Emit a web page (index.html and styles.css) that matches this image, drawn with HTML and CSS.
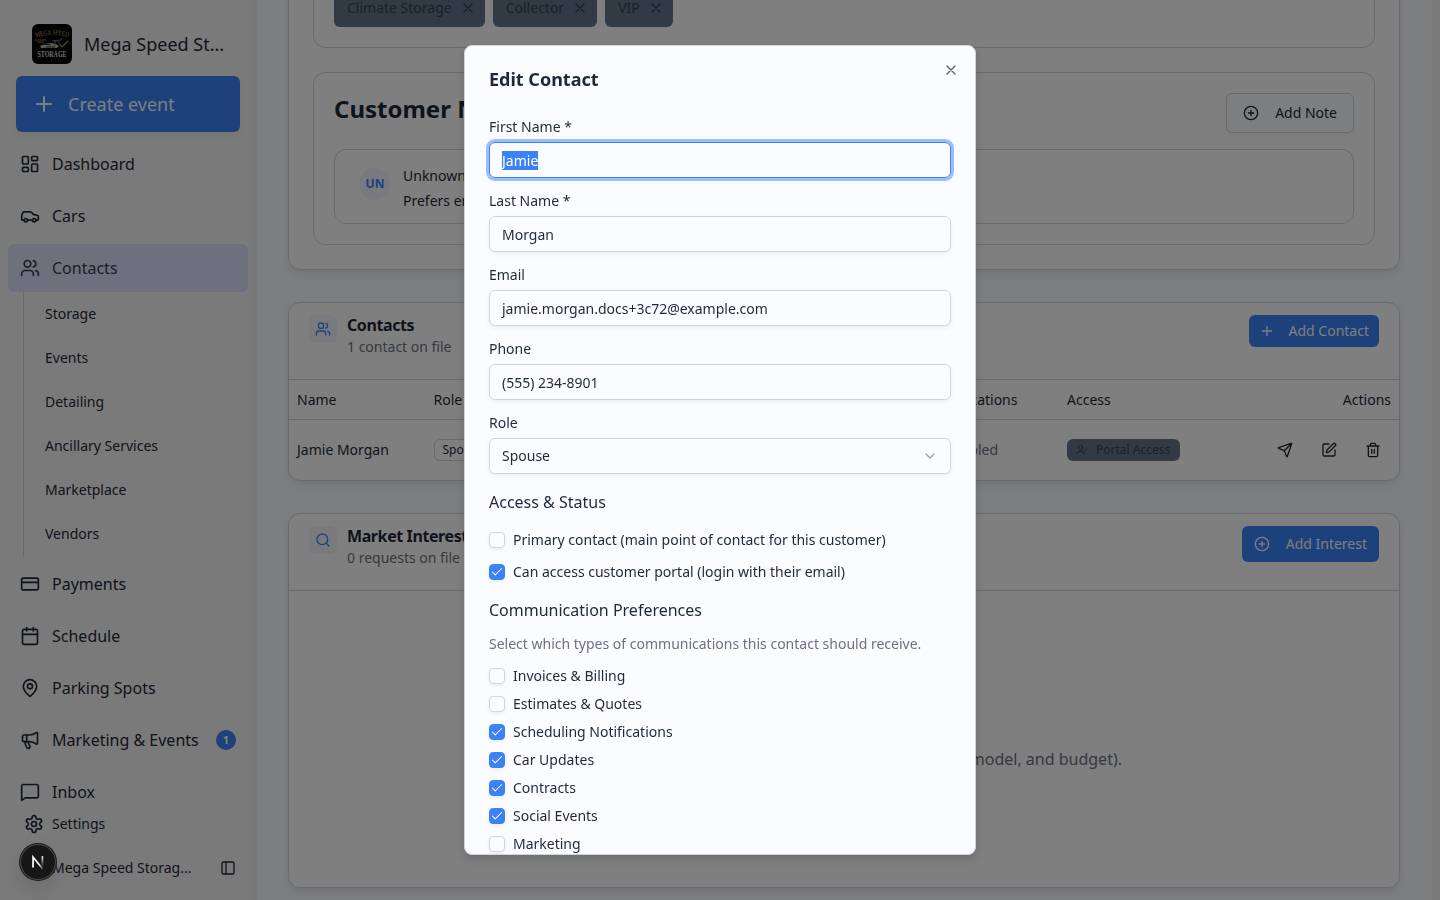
FILE: index.html
```html
<!DOCTYPE html>
<html lang="en">
<head>
    <meta charset="UTF-8">
    <meta name="viewport" content="width=device-width, initial-scale=1.0">
    <title>Mega Speed Storage</title>
    <link rel="stylesheet" href="styles.css">
</head>
<body>
    <svg class="sprite">
        <symbol id="plus" viewBox="0 0 24 24"><path d="M5 12h14M12 5v14"/></symbol>
        <symbol id="circle-plus" viewBox="0 0 24 24"><circle cx="12" cy="12" r="10"/><path d="M8 12h8M12 8v8"/></symbol>
        <symbol id="x" viewBox="0 0 24 24"><path d="M18 6 6 18M6 6l12 12"/></symbol>
        <symbol id="dashboard" viewBox="0 0 24 24"><rect x="3" y="3" width="7" height="9" rx="1"/><rect x="14" y="3" width="7" height="5" rx="1"/><rect x="14" y="12" width="7" height="9" rx="1"/><rect x="3" y="16" width="7" height="5" rx="1"/></symbol>
        <symbol id="car" viewBox="0 0 24 24"><path d="M19 17h2c.6 0 1-.4 1-1v-3c0-.9-.7-1.700-1.500-1.900C18.700 10.600 16 10 16 10s-1.300-1.400-2.200-2.300c-.5-.4-1.100-.7-1.800-.7H5c-.6 0-1.100.4-1.400.9l-1.400 2.900A3.700 3.700 0 0 0 2 12v4c0 .6.4 1 1 1h2"/><circle cx="7" cy="17" r="2"/><path d="M9 17h6"/><circle cx="17" cy="17" r="2"/></symbol>
        <symbol id="users" viewBox="0 0 24 24"><path d="M16 21v-2a4 4 0 0 0-4-4H6a4 4 0 0 0-4 4v2"/><circle cx="9" cy="7" r="4"/><path d="M22 21v-2a4 4 0 0 0-3-3.870M16 3.130a4 4 0 0 1 0 7.750"/></symbol>
        <symbol id="card" viewBox="0 0 24 24"><rect x="2" y="5" width="20" height="14" rx="2"/><path d="M2 10h20"/></symbol>
        <symbol id="calendar" viewBox="0 0 24 24"><path d="M8 2v4M16 2v4"/><rect x="3" y="4" width="18" height="18" rx="2"/><path d="M3 10h18"/></symbol>
        <symbol id="pin" viewBox="0 0 24 24"><path d="M20 10c0 4.993-5.539 10.193-7.399 11.799a1 1 0 0 1-1.202 0C9.539 20.193 4 14.993 4 10a8 8 0 0 1 16 0"/><circle cx="12" cy="10" r="3"/></symbol>
        <symbol id="megaphone" viewBox="0 0 24 24"><path d="M11 6a13 13 0 0 0 8.400-2.800A1 1 0 0 1 21 4v12a1 1 0 0 1-1.600.8A13 13 0 0 0 11 14H5a2 2 0 0 1-2-2V8a2 2 0 0 1 2-2z"/><path d="M6 14a12 12 0 0 0 2.400 7.200 2 2 0 0 0 3.200-2.400A8 8 0 0 1 10 14M8 6v8"/></symbol>
        <symbol id="message" viewBox="0 0 24 24"><path d="M22 17a2 2 0 0 1-2 2H6.500L2 22V5a2 2 0 0 1 2-2h16a2 2 0 0 1 2 2z"/></symbol>
        <symbol id="settings" viewBox="0 0 24 24"><path d="M12.220 2h-.44a2 2 0 0 0-2 2v.18a2 2 0 0 1-1 1.730l-.43.25a2 2 0 0 1-2 0l-.15-.08a2 2 0 0 0-2.730.73l-.22.38a2 2 0 0 0 .73 2.730l.15.1a2 2 0 0 1 1 1.720v.51a2 2 0 0 1-1 1.740l-.15.09a2 2 0 0 0-.73 2.730l.22.38a2 2 0 0 0 2.730.73l.15-.08a2 2 0 0 1 2 0l.43.25a2 2 0 0 1 1 1.730V20a2 2 0 0 0 2 2h.44a2 2 0 0 0 2-2v-.18a2 2 0 0 1 1-1.730l.43-.25a2 2 0 0 1 2 0l.15.08a2 2 0 0 0 2.730-.73l.22-.39a2 2 0 0 0-.73-2.730l-.15-.08a2 2 0 0 1-1-1.740v-.5a2 2 0 0 1 1-1.740l.15-.09a2 2 0 0 0 .73-2.730l-.22-.38a2 2 0 0 0-2.730-.73l-.15.08a2 2 0 0 1-2 0l-.43-.25a2 2 0 0 1-1-1.730V4a2 2 0 0 0-2-2z"/><circle cx="12" cy="12" r="3"/></symbol>
        <symbol id="panel" viewBox="0 0 24 24"><rect x="3" y="3" width="18" height="18" rx="2"/><path d="M9 3v18"/></symbol>
        <symbol id="search" viewBox="0 0 24 24"><circle cx="11" cy="11" r="8"/><path d="m21 21-4.300-4.300"/></symbol>
        <symbol id="user-check" viewBox="0 0 24 24"><path d="m16 11 2 2 4-4M16 21v-2a4 4 0 0 0-4-4H6a4 4 0 0 0-4 4v2"/><circle cx="9" cy="7" r="4"/></symbol>
        <symbol id="send" viewBox="0 0 24 24"><path d="M14.536 21.686a.5.5 0 0 0 .937-.024l6.500-19a.496.496 0 0 0-.635-.635l-19 6.500a.5.5 0 0 0-.024.937l7.930 3.180a2 2 0 0 1 1.112 1.110zM21.854 2.147l-10.940 10.939"/></symbol>
        <symbol id="edit" viewBox="0 0 24 24"><path d="M12 3H5a2 2 0 0 0-2 2v14a2 2 0 0 0 2 2h14a2 2 0 0 0 2-2v-7"/><path d="M18.375 2.625a1 1 0 0 1 3 3l-9.013 9.014a2 2 0 0 1-.853.505l-2.873.84a.5.5 0 0 1-.62-.62l.84-2.873a2 2 0 0 1 .506-.852z"/></symbol>
        <symbol id="trash" viewBox="0 0 24 24"><path d="M3 6h18M19 6v14c0 1-1 2-2 2H7c-1 0-2-1-2-2V6M8 6V4c0-1 1-2 2-2h4c1 0 2 1 2 2v2M10 11v6M14 11v6"/></symbol>
        <symbol id="chevron" viewBox="0 0 24 24"><path d="m6 9 6 6 6-6"/></symbol>
        <symbol id="check" viewBox="0 0 24 24"><path d="M20 6 9 17l-5-5"/></symbol>
    </svg>

    <div class="app">
        <aside class="sidebar">
            <div class="brand">
                <svg class="brand-logo" viewBox="0 0 40 40">
                    <rect width="40" height="40" rx="6" fill="#050707"/>
                    <path id="arc" d="M4 13.500Q20 8 38 13.500" fill="none"/>
                    <text class="logo-arc" textLength="33" lengthAdjust="spacingAndGlyphs"><textPath href="#arc">MEGA SPEED</textPath></text>
                    <path d="M3 16h11M5 18h7" stroke="#86683e" stroke-width="1.200"/>
                    <path d="M8 22l5-2 6-1 5 1 3 2-2 2H9z" fill="#b8b9a8"/>
                    <path d="M11 20l8 1M14 23h9" stroke="#30332c" stroke-width="1"/>
                    <path d="M23 16v6M26 17l2 4M20 17l9-1M29 14l1 2" stroke="#76775f" stroke-width="1"/>
                    <path d="M28 21l2 2 6-6" stroke="#9d955f" stroke-width="1.200" fill="none"/>
                    <text class="logo-name" x="5.500" y="33" textLength="29" lengthAdjust="spacingAndGlyphs">STORAGE</text>
                </svg>
                <span>Mega Speed St...</span>
            </div>
            <button class="create"><svg class="icon"><use href="#plus"/></svg>Create event</button>
            <nav class="nav">
                <a class="nav-item"><svg class="icon"><use href="#dashboard"/></svg>Dashboard</a>
                <a class="nav-item"><svg class="icon"><use href="#car"/></svg>Cars</a>
                <a class="nav-item active"><svg class="icon"><use href="#users"/></svg>Contacts</a>
                <div class="subnav">
                    <a>Storage</a>
                    <a>Events</a>
                    <a>Detailing</a>
                    <a>Ancillary Services</a>
                    <a>Marketplace</a>
                    <a>Vendors</a>
                </div>
                <a class="nav-item"><svg class="icon"><use href="#card"/></svg>Payments</a>
                <a class="nav-item"><svg class="icon"><use href="#calendar"/></svg>Schedule</a>
                <a class="nav-item"><svg class="icon"><use href="#pin"/></svg>Parking Spots</a>
                <a class="nav-item"><svg class="icon"><use href="#megaphone"/></svg>Marketing &amp; Events<span class="count">1</span></a>
                <a class="nav-item"><svg class="icon"><use href="#message"/></svg>Inbox</a>
            </nav>
            <div class="sidebar-footer">
                <a class="settings"><svg class="icon"><use href="#settings"/></svg>Settings</a>
                <div class="team"><span>Mega Speed Storag...</span><svg class="icon"><use href="#panel"/></svg></div>
            </div>
        </aside>

        <main class="main">
            <section class="card profile">
                <div class="panel tags">
                    <span class="tag">Climate Storage<svg class="icon"><use href="#x"/></svg></span>
                    <span class="tag">Collector<svg class="icon"><use href="#x"/></svg></span>
                    <span class="tag">VIP<svg class="icon"><use href="#x"/></svg></span>
                </div>
                <div class="panel">
                    <div class="panel-head">
                        <h2>Customer Notes</h2>
                        <button class="btn outline"><svg class="icon"><use href="#circle-plus"/></svg>Add Note</button>
                    </div>
                    <div class="note">
                        <span class="avatar">UN</span>
                        <div>
                            <p>Unknown</p>
                            <p>Prefers email</p>
                        </div>
                    </div>
                </div>
            </section>

            <section class="card">
                <header class="card-head">
                    <span class="tile"><svg class="icon"><use href="#users"/></svg></span>
                    <div class="card-title">
                        <h3>Contacts</h3>
                        <p>1 contact on file</p>
                    </div>
                    <button class="btn primary small"><svg class="icon"><use href="#plus"/></svg>Add Contact</button>
                </header>
                <table class="contacts">
                    <thead>
                        <tr>
                            <th class="col-name">Name</th>
                            <th class="col-role">Role</th>
                            <th class="col-email">Email</th>
                            <th class="col-comm">Communications</th>
                            <th class="col-access">Access</th>
                            <th class="col-actions">Actions</th>
                        </tr>
                    </thead>
                    <tbody>
                        <tr>
                            <td>Jamie Morgan</td>
                            <td><span class="role">Spouse</span></td>
                            <td>jamie.morgan</td>
                            <td><span class="enabled">4 enabled</span></td>
                            <td><span class="access"><svg class="icon"><use href="#user-check"/></svg>Portal Access</span></td>
                            <td>
                                <div class="actions">
                                    <svg class="icon"><use href="#send"/></svg>
                                    <svg class="icon"><use href="#edit"/></svg>
                                    <svg class="icon"><use href="#trash"/></svg>
                                </div>
                            </td>
                        </tr>
                    </tbody>
                </table>
            </section>

            <section class="card market">
                <header class="card-head">
                    <span class="tile"><svg class="icon"><use href="#search"/></svg></span>
                    <div class="card-title">
                        <h3>Market Interests</h3>
                        <p>0 requests on file</p>
                    </div>
                    <button class="btn primary"><svg class="icon"><use href="#circle-plus"/></svg>Add Interest</button>
                </header>
                <div class="empty"><p>Add a request for this customer (make, model, and budget).</p></div>
            </section>
        </main>
    </div>

    <div class="overlay">
        <div class="modal">
            <svg class="icon close"><use href="#x"/></svg>
            <h2>Edit Contact</h2>
            <div class="field">
                <label>First Name *</label>
                <div class="input focused"><span class="selected">Jamie</span></div>
            </div>
            <div class="field">
                <label>Last Name *</label>
                <div class="input">Morgan</div>
            </div>
            <div class="field">
                <label>Email</label>
                <div class="input">jamie.morgan.docs+3c72@example.com</div>
            </div>
            <div class="field">
                <label>Phone</label>
                <div class="input">(555) 234-8901</div>
            </div>
            <div class="field">
                <label>Role</label>
                <div class="input select">Spouse<svg class="icon"><use href="#chevron"/></svg></div>
            </div>

            <h3>Access &amp; Status</h3>
            <div class="checks wide">
                <label class="check"><span class="box"></span>Primary contact (main point of contact for this customer)</label>
                <label class="check"><span class="box on"><svg class="icon"><use href="#check"/></svg></span>Can access customer portal (login with their email)</label>
            </div>

            <h3>Communication Preferences</h3>
            <p class="hint">Select which types of communications this contact should receive.</p>
            <div class="checks">
                <label class="check"><span class="box"></span>Invoices &amp; Billing</label>
                <label class="check"><span class="box"></span>Estimates &amp; Quotes</label>
                <label class="check"><span class="box on"><svg class="icon"><use href="#check"/></svg></span>Scheduling Notifications</label>
                <label class="check"><span class="box on"><svg class="icon"><use href="#check"/></svg></span>Car Updates</label>
                <label class="check"><span class="box on"><svg class="icon"><use href="#check"/></svg></span>Contracts</label>
                <label class="check"><span class="box on"><svg class="icon"><use href="#check"/></svg></span>Social Events</label>
                <label class="check"><span class="box"></span>Marketing</label>
            </div>
        </div>
    </div>

    <div class="dev-badge">
        <svg viewBox="0 0 40 40">
            <defs>
                <linearGradient id="fade" x1="0" y1="0" x2="0" y2="1"><stop offset="0" stop-color="#fff"/><stop offset="1" stop-color="#fff" stop-opacity="0"/></linearGradient>
                <linearGradient id="diag" x1="0" y1="0" x2="1" y2="1"><stop offset=".6" stop-color="#fff"/><stop offset="1" stop-color="#fff" stop-opacity=".1"/></linearGradient>
            </defs>
            <path d="M14.500 26V14.500L25.500 28" fill="none" stroke="url(#diag)" stroke-width="1.900"/>
            <rect x="24" y="13.500" width="1.800" height="12" fill="url(#fade)"/>
        </svg>
    </div>
</body>
</html>
```

FILE: styles.css
```css
* {
    box-sizing: border-box;
}
body {
    margin: 0;
    height: 100vh;
    overflow: hidden;
    font-family: "Noto Sans", sans-serif;
    font-size: 14px;
    line-height: 20px;
    color: #1f2937;
    background-color: #fafcff;
}
h2, h3, p {
    margin: 0;
}
button {
    font-family: inherit;
    color: inherit;
    border: none;
}
.sprite {
    display: none;
}
.icon {
    width: 16px;
    height: 16px;
    flex-shrink: 0;
    fill: none;
    stroke: currentColor;
    stroke-width: 2;
    stroke-linecap: round;
    stroke-linejoin: round;
}
.app {
    display: flex;
    height: 100vh;
}

/* Sidebar */
.sidebar {
    width: 257px;
    height: 100vh;
    flex-shrink: 0;
    display: flex;
    flex-direction: column;
    background-color: #f5f5f5;
    border-right: 5px solid #f1f1f1;
}
.brand {
    display: flex;
    align-items: center;
    gap: 12px;
    padding: 24px 0 12px 32px;
    font-size: 18px;
    line-height: 28px;
    white-space: nowrap;
}
.brand-logo {
    width: 40px;
    height: 40px;
}
.logo-arc {
    font-family: "Liberation Serif", serif;
    font-size: 7px;
    fill: #b8945c;
}
.logo-name {
    font-family: "Liberation Serif", serif;
    font-size: 7.5px;
    font-weight: bold;
    fill: #d8d8d0;
}
.create {
    display: flex;
    align-items: center;
    gap: 12px;
    width: 224px;
    height: 56px;
    margin: 0 0 8px 16px;
    padding: 0 16px;
    flex-shrink: 0;
    border-radius: 6px;
    background-color: #3b82f6;
    color: #fafcff;
    font-size: 18px;
    box-shadow: 0 4px 8px rgba(0, 0, 0, 0.05);
}
.create .icon {
    width: 24px;
    height: 24px;
}
.nav {
    flex: 1;
    min-height: 0;
    overflow: hidden;
    padding-left: 8px;
}
.nav-item {
    display: flex;
    align-items: center;
    gap: 12px;
    width: 240px;
    height: 48px;
    margin-bottom: 4px;
    padding: 0 12px;
    border-radius: 6px;
    font-size: 16px;
    white-space: nowrap;
}
.nav-item .icon {
    width: 20px;
    height: 20px;
}
.nav-item.active {
    margin-bottom: 0;
    background-color: #dfe1fb;
    color: #374151;
}
.count {
    width: 20px;
    height: 20px;
    margin-left: auto;
    border-radius: 50%;
    background-color: #3b82f6;
    color: #fff;
    font-size: 11px;
    font-weight: 700;
    text-align: center;
}
.subnav {
    margin: 0 0 4px 15px;
    border-left: 1px solid #d1d5db;
}
.subnav a {
    display: block;
    padding-left: 21px;
    line-height: 44px;
}
.sidebar-footer {
    height: 96px;
}
.settings {
    display: flex;
    align-items: center;
    gap: 8px;
    height: 40px;
    padding-left: 24px;
}
.settings .icon {
    width: 20px;
    height: 20px;
}
.team {
    display: flex;
    align-items: center;
    justify-content: space-between;
    height: 48px;
    padding: 0 16px 0 52px;
}

/* Main column */
.main {
    flex: 1;
    height: 100vh;
    padding: 0 32px 0 31px;
    overflow: hidden;
    border-right: 8px solid #f1f1f1;
}
.card {
    margin-bottom: 32px;
    border: 1px solid #d1d5db;
    border-radius: 12px;
    background-color: #fff;
    box-shadow: 0 4px 8px -1px rgba(0, 0, 0, 0.1);
}
.profile {
    margin-top: -57px;
    padding: 24px;
}
.panel {
    padding: 20px;
    border: 1px solid #d1d5db;
    border-radius: 12px;
}
.tags {
    display: flex;
    gap: 8px;
    margin-bottom: 24px;
}
.tag {
    display: flex;
    align-items: center;
    gap: 8px;
    height: 38px;
    padding: 0 9px 0 13px;
    border-radius: 6px;
    background-color: #64748b;
    color: #374151;
}
.panel-head {
    display: flex;
    justify-content: space-between;
    margin-bottom: 16px;
}
.panel-head h2 {
    font-size: 24px;
    line-height: 32px;
    font-weight: 700;
}
.btn {
    display: flex;
    align-items: center;
    gap: 16px;
    height: 36px;
    padding: 0 12px;
    border-radius: 6px;
    font-size: 14px;
    line-height: 20px;
    white-space: nowrap;
}
.btn.outline {
    height: 40px;
    padding: 0 16px;
    border: 1px solid #d1d5db;
    background-color: #fafcff;
    box-shadow: 0 2px 4px rgba(0, 0, 0, 0.05);
}
.btn.primary {
    background-color: #3b82f6;
    color: #fafcff;
}
.btn.small {
    height: 32px;
    padding: 0 10px;
    gap: 14px;
}
.note {
    display: flex;
    gap: 12px;
    height: 75px;
    padding: 16px 24px;
    border: 1px solid #d1d5db;
    border-radius: 12px;
}
.note p {
    margin-bottom: 5px;
}
.avatar {
    width: 32px;
    height: 32px;
    margin-top: 2px;
    border-radius: 50%;
    background-color: #f1f5fd;
    color: #3b82f6;
    font-size: 12px;
    line-height: 32px;
    font-weight: 700;
    text-align: center;
}
.card-head {
    display: flex;
    align-items: flex-start;
    height: 77px;
    padding: 12px 20px;
    border-bottom: 1px solid #d1d5db;
}
.tile {
    display: flex;
    align-items: center;
    justify-content: center;
    width: 28px;
    height: 28px;
    border-radius: 6px;
    background-color: #f1f5fd;
    color: #3b82f6;
}
.card-title {
    margin: 0 auto 0 10px;
}
.card-title h3 {
    margin-bottom: 2px;
    font-size: 16px;
    line-height: 20px;
    font-weight: 700;
    letter-spacing: -0.4px;
}
.card-title p {
    color: #6b7280;
}
.contacts {
    width: 100%;
    table-layout: fixed;
    border-collapse: separate;
    border-spacing: 0;
    text-align: left;
}
.contacts th {
    height: 40px;
    padding: 0 8px;
    font-weight: 400;
    border-bottom: 1px solid #d1d5db;
}
.contacts td {
    height: 60px;
    padding: 0 8px;
}
.contacts .col-name {
    width: 136.5px;
}
.contacts .col-role {
    width: 160px;
}
.contacts .col-comm {
    width: 161px;
}
.contacts .col-access {
    width: 160px;
}
.contacts .col-actions {
    width: 180px;
    text-align: right;
}
.role, .access {
    display: inline-flex;
    align-items: center;
    height: 22px;
    padding: 0 8px;
    border: 1px solid #d1d5db;
    border-radius: 6px;
    font-size: 12px;
    line-height: 16px;
    vertical-align: middle;
}
.access {
    gap: 8px;
    padding: 0 10px 0 9px;
    border: none;
    background-color: #64748b;
    color: #374151;
}
.access .icon {
    width: 12px;
    height: 12px;
}
.enabled {
    display: inline-block;
    width: 92px;
    color: #6b7280;
    text-align: right;
}
.actions {
    display: flex;
    justify-content: flex-end;
    gap: 28px;
    padding-right: 10px;
}
.market {
    height: 375px;
}
.empty {
    width: 556px;
    margin: 156px auto 0;
    font-size: 16px;
    line-height: 24px;
    color: #6b7280;
    text-align: right;
}

/* Edit contact dialog */
.overlay {
    position: fixed;
    inset: 0;
    display: flex;
    align-items: center;
    justify-content: center;
    background-color: rgba(0, 0, 0, 0.5);
}
.modal {
    position: relative;
    width: 512px;
    height: 810px;
    padding: 24px;
    overflow: hidden;
    border: 1px solid #d1d5db;
    border-radius: 8px;
    background-color: #fafcff;
    box-shadow: 0 4px 10px rgba(0, 0, 0, 0.15);
}
.close {
    position: absolute;
    top: 16px;
    right: 16px;
    color: #5b6270;
}
.modal h2 {
    margin-bottom: 24px;
    font-size: 18px;
    line-height: 18px;
    font-weight: 700;
}
.field {
    margin-bottom: 8px;
}
.field label {
    display: block;
    height: 30px;
    line-height: 30px;
}
.input {
    display: flex;
    align-items: center;
    height: 36px;
    padding: 2px 12px 0;
    border: 1px solid #d1d5db;
    border-radius: 6px;
    box-shadow: 0 2px 5px rgba(0, 0, 0, 0.06);
}
.input.focused {
    padding-top: 0;
    border-color: #3b82f6;
    box-shadow: 0 0 0 3px rgba(59, 130, 246, 0.5);
}
.selected {
    line-height: 19px;
    background-color: #3b82f6;
    color: #fff;
}
.input.select {
    justify-content: space-between;
    padding-top: 0;
}
.select .icon {
    color: #a0a5ad;
}
.modal h3 {
    margin: 16px 0;
    font-size: 16px;
    line-height: 24px;
    font-weight: 400;
}
.modal .hint {
    margin: -4px 0 12px;
    color: #6b7280;
}
.checks {
    display: flex;
    flex-direction: column;
    gap: 8px;
}
.checks.wide {
    gap: 12px;
}
.check {
    display: flex;
    align-items: center;
    gap: 8px;
}
.box {
    display: flex;
    align-items: center;
    justify-content: center;
    width: 16px;
    height: 16px;
    border: 1px solid #d1d5db;
    border-radius: 4px;
    box-shadow: 0 2px 4px rgba(0, 0, 0, 0.06);
}
.box.on {
    border-color: #3b82f6;
    background-color: #3b82f6;
    color: #fff;
}
.box .icon {
    width: 14px;
    height: 14px;
    stroke-width: 1.8;
}

/* Floating dev tools button */
.dev-badge {
    position: fixed;
    left: 20px;
    bottom: 20px;
    width: 36px;
    height: 36px;
    border-radius: 50%;
    background-color: #171717;
    box-shadow: 0 0 0 1px #171717, inset 0 0 0 1px #4a4a4a, 0 10px 24px rgba(0, 0, 0, 0.12);
}
.dev-badge svg {
    display: block;
    width: 36px;
    height: 36px;
}
```
